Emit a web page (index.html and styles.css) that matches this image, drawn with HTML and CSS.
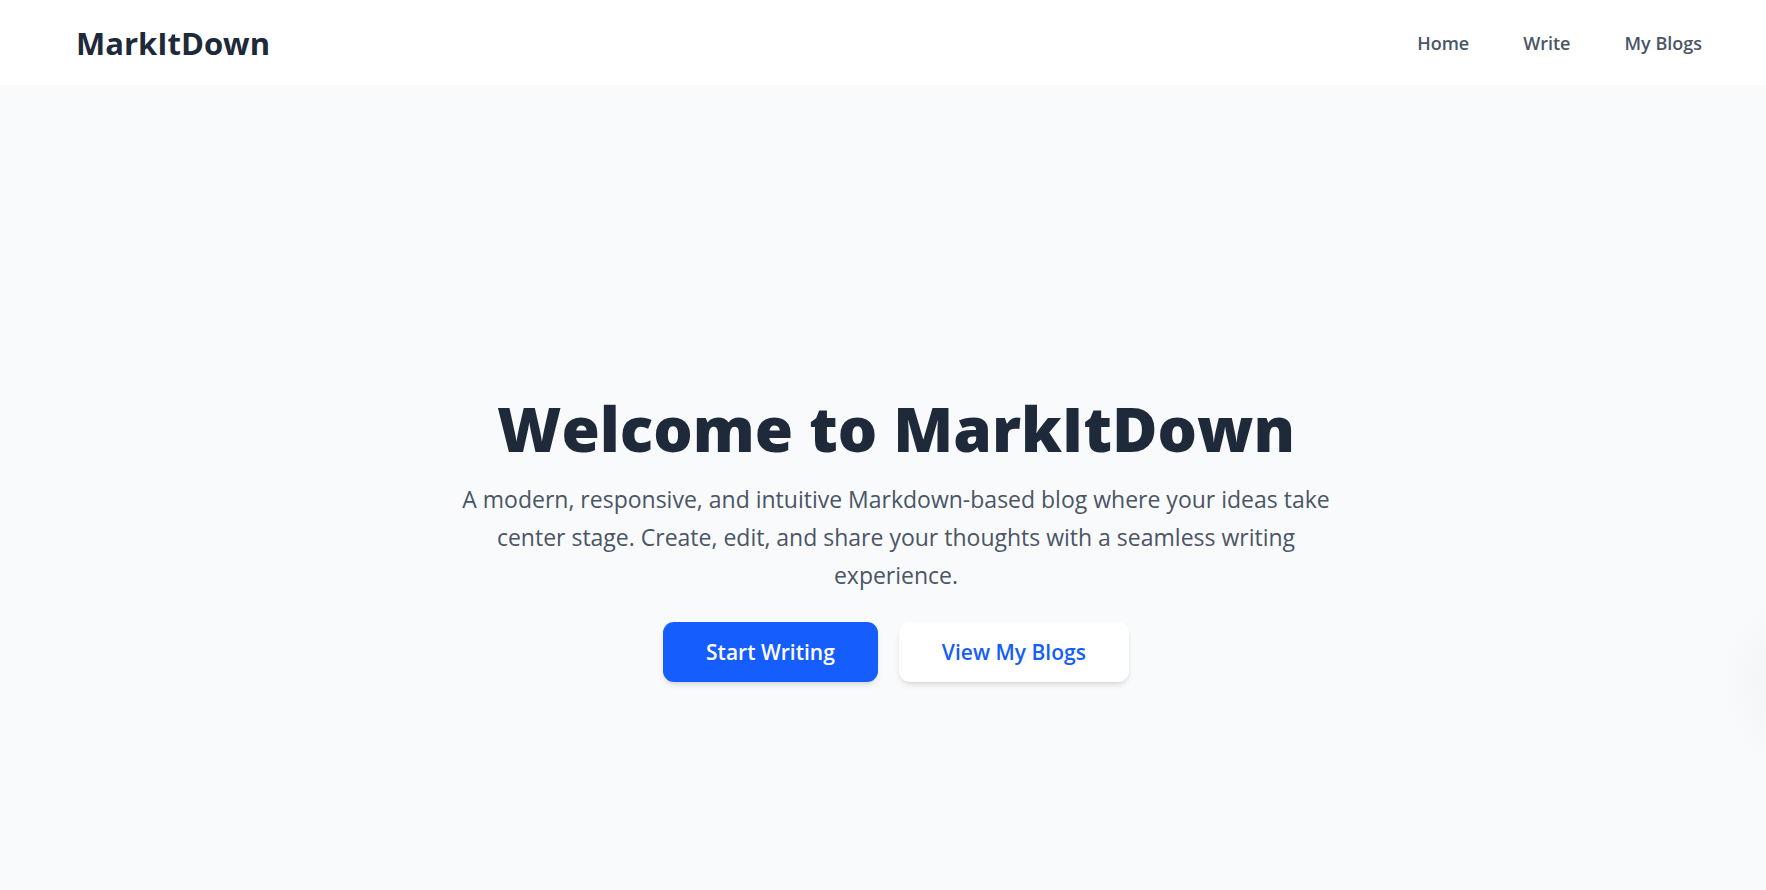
FILE: index.html
```html
<!DOCTYPE html>
<html lang="en">
<head>
<meta charset="utf-8">
<meta name="viewport" content="width=device-width, initial-scale=1">
<title>MarkItDown</title>
<link rel="stylesheet" href="styles.css">
</head>
<body>
<header class="navbar">
  <a class="brand" href="#">MarkItDown</a>
  <nav class="nav-links">
    <a href="#">Home</a>
    <a href="#">Write</a>
    <a href="#">My Blogs</a>
  </nav>
</header>
<main class="hero">
  <h1 class="hero-title">Welcome to MarkItDown</h1>
  <p class="hero-text">A modern, responsive, and intuitive Markdown-based blog where your ideas take center stage. Create, edit, and share your thoughts with a seamless writing experience.</p>
  <div class="actions">
    <button class="button button-primary" type="button">Start Writing</button>
    <button class="button button-secondary" type="button">View My Blogs</button>
  </div>
</main>
</body>
</html>
```
FILE: styles.css
```css
* { box-sizing: border-box; }
body {
  display: flex;
  flex-direction: column;
  min-height: 100vh;
  margin: 0;
  background: #f9fafc;
  color: #1e2939;
  font-family: "Open Sans", "Noto Sans", sans-serif;
}
.navbar {
  display: flex;
  align-items: center;
  justify-content: space-between;
  padding: 20px 64px 20px 76px;
  background: #fff;
}
.brand {
  padding-top: 2px;
  color: #1e2939;
  font-size: 31px;
  font-weight: 700;
  line-height: 43px;
  text-decoration: none;
}
.nav-links { display: flex; gap: 54px; }
.nav-links a {
  color: #4a5565;
  font-size: 18px;
  font-weight: 600;
  line-height: 28px;
  text-decoration: none;
}
.hero {
  display: flex;
  flex: 1;
  flex-direction: column;
  align-items: center;
  justify-content: center;
  padding: 98px 24px 0 50px;
  background: radial-gradient(ellipse 76px 92px at calc(100% + 28px) 596px, #f3f3f5, #f9fafc00);
  text-align: center;
}
.hero-title {
  margin: 0 0 16px;
  font-size: 62px;
  font-weight: 800;
  line-height: 72px;
}
.hero-text {
  max-width: 896px;
  margin: 0 0 28px;
  color: #4a5565;
  font-size: 23px;
  line-height: 38px;
}
.actions { display: flex; gap: 21px; }
.button {
  height: 60px;
  padding: 0 43px;
  border: 0;
  border-radius: 11px;
  box-shadow: 0 4px 6px -1px #0000001a, 0 2px 4px -2px #0000001a;
  font-family: inherit;
  font-size: 21px;
  font-weight: 600;
}
.button-primary { background: #155dfc; color: #fff; }
.button-secondary { background: #fff; color: #155dfc; }
```
